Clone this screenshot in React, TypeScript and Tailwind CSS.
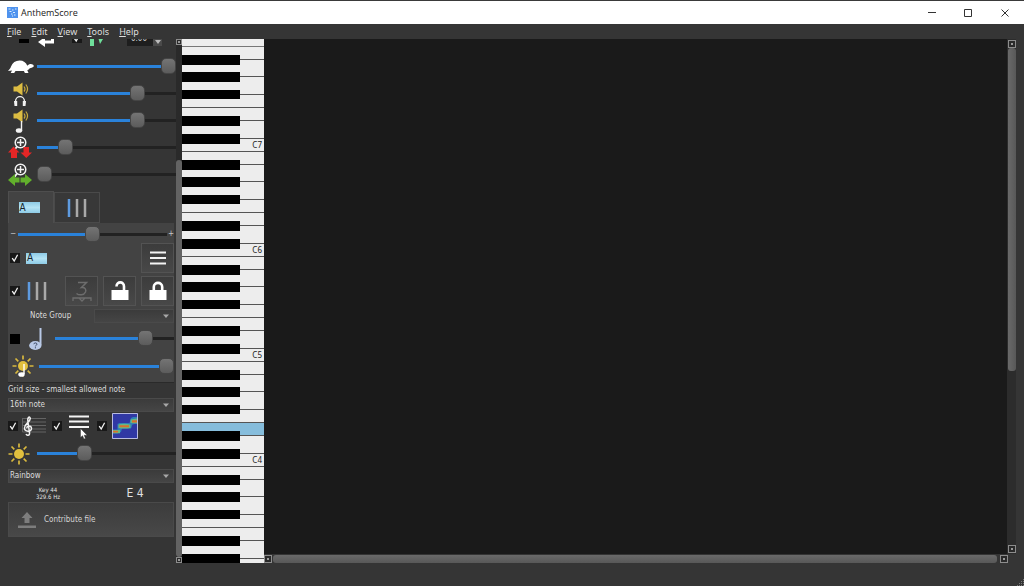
import { useState } from "react";
import type { CSSProperties, ReactNode } from "react";
import clsx from "clsx";

const Slider = ({ label, value }: { label: string; value: number }) => {
  const [current, setCurrent] = useState(value);

  return (
    <input
      type="range"
      aria-label={label}
      value={current}
      onChange={(e) => setCurrent(Number(e.target.value))}
      style={{ "--fill": `${current}%` } as CSSProperties}
      className="block h-4 min-w-0 flex-1 appearance-none bg-transparent [&::-webkit-slider-runnable-track]:h-[3px] [&::-webkit-slider-runnable-track]:bg-[linear-gradient(to_right,#2a82da_var(--fill),#222222_var(--fill))] [&::-webkit-slider-thumb]:-mt-[7px] [&::-webkit-slider-thumb]:h-4 [&::-webkit-slider-thumb]:w-[15px] [&::-webkit-slider-thumb]:appearance-none [&::-webkit-slider-thumb]:rounded-[5px] [&::-webkit-slider-thumb]:border [&::-webkit-slider-thumb]:border-[#454545] [&::-webkit-slider-thumb]:bg-linear-to-b [&::-webkit-slider-thumb]:from-[#747474] [&::-webkit-slider-thumb]:to-[#5c5c5c]"
    />
  );
};

const Check = ({ label, checked = false }: { label: string; checked?: boolean }) => (
  <span className="grid size-[10px] shrink-0">
    <input
      type="checkbox"
      aria-label={label}
      defaultChecked={checked}
      className="peer col-start-1 row-start-1 size-[10px] appearance-none bg-black checked:bg-[#181818]"
    />
    <svg
      viewBox="0 0 10 10"
      className="pointer-events-none invisible col-start-1 row-start-1 size-[10px] peer-checked:visible"
    >
      <path d="M2.2 5.2 4.2 8 7.6 1.8" fill="none" stroke="#f0f0f0" strokeWidth="1.3" />
    </svg>
  </span>
);

const Turtle = () => (
  <svg viewBox="0 0 26 14" className="h-[14px] w-[26px]">
    <path
      d="M0 11C1.500 9 2.500 8.500 3 6.500 4.500 2.500 7.500 .5 11.500 .5c4 0 6.500 2 7.800 5.200 1.200-1.200 2.800-1.800 4.300-1.500 1.700.2 2.400 1.200 2.100 2.200-.4 1-2.400 1.200-3.900 1.800-.8.900-1.500 1.500-2.500 2l1.200 2.900h-3.600l-1-2.200H7.500l-1.300 2.200H2.700l1.300-2.500z"
      fill="#fff"
    />
  </svg>
);

const Speaker = ({ children }: { children: ReactNode }) => (
  <svg viewBox="0 0 18 24" className="h-6 w-[18px]">
    <path d="M1.500 4.500H5L10.500 .5v13L5 9.500H1.500z" fill="#dcbc42" />
    <path d="M12 4.500q2 2.700 0 5M13.800 2.500q3.500 4.500 0 9" fill="none" stroke="#c9ab3c" strokeWidth="1.200" />
    {children}
  </svg>
);

const Magnifier = () => (
  <g fill="none" stroke="#f2f2f2">
    <circle cx="12.500" cy="6.500" r="5.300" strokeWidth="1.500" />
    <path d="M12.500 3v7M9 6.500h7" strokeWidth="1.500" />
    <path d="M9 10.500 6.500 14" strokeWidth="1.800" />
  </g>
);

const ZoomVertical = () => (
  <svg viewBox="0 0 24 24" className="size-6">
    <Magnifier />
    <path d="M5.500 10.500 11.500 16.500H9V22H3v-5.500H0z" fill="#e42626" />
    <path d="M15.500 11H21v5.500h3L18.300 22 12.500 16.500h3z" fill="#e42626" />
  </svg>
);

const ZoomHorizontal = () => (
  <svg viewBox="0 0 24 24" className="size-6">
    <Magnifier />
    <path d="M0 17 7 11v3.500h4.500v5H7V23zM24 17 17 11v3.500h-4.500v5H17V23z" fill="#62b02c" />
  </svg>
);

const NoteBlock = () => (
  <span className="flex h-[11px] w-[21px] items-center bg-linear-to-b from-[#8ecbe6] via-[#b4e4f5] to-[#8ecbe6] pl-px text-[10px] leading-none text-[#16242c]">
    A
  </span>
);

const Bars = () => (
  <svg viewBox="0 0 20 18" className="h-[18px] w-5">
    <path d="M2 0v18" stroke="#5e9be0" strokeWidth="2.500" />
    <path d="M10 0v18M18 0v18" stroke="#a9a9a9" strokeWidth="2.500" />
  </svg>
);

const Lines = () => (
  <svg viewBox="0 0 16 14" className="h-[14px] w-4">
    <path d="M0 1.500h16M0 7h16M0 12.500h16" stroke="#f4f4f4" strokeWidth="2.200" />
  </svg>
);

const Padlock = ({ open = false }: { open?: boolean }) => (
  <svg viewBox="0 0 18 20" className="h-5 w-[18px]">
    <path d="M.5 9h17v10H.5z" fill="#fff" />
    <path
      d={open ? "M5.500 5.500C5.500 0 13 0 13 5.500V9" : "M4.800 9.500V6C4.800 .5 13.200 .5 13.200 6v3.500"}
      fill="none"
      stroke="#fff"
      strokeWidth="2.600"
    />
  </svg>
);

const Triplet = () => (
  <svg viewBox="0 0 20 21" className="h-[21px] w-5" fill="none" stroke="#6d6d6d">
    <path d="M6 1.500H14.500L9.500 6.500C13 6 14.500 8.500 13.500 11 12 14.500 7 14.500 4.500 12.500" strokeWidth="1.500" />
    <path d="M1 20v-3h18v3M7 17l3 3 3-3" strokeWidth="1.300" />
  </svg>
);

const QuestionNote = () => (
  <svg viewBox="0 0 14 22" className="h-[22px] w-[14px]">
    <path d="M11.500 0v17" stroke="#b9c9e6" strokeWidth="2" />
    <ellipse cx="6.300" cy="17.500" rx="6.200" ry="4.400" fill="#b9c9e6" />
    <path d="M4.800 16.200c0-1.700 3.200-1.700 3.200 0 0 1-1.600 1-1.600 2.200M6.400 19.200v1.200" fill="none" stroke="#3c4a66" />
  </svg>
);

const Sun = ({ note = false }: { note?: boolean }) => (
  <svg viewBox="0 0 22 22" className="size-[22px] shrink-0">
    <circle cx="11" cy="11" r="5" fill="#e0bf3e" />
    <path
      d="M11 .5V4.500M11 17.500V21.500M.5 11h4M17.500 11h4M3.500 3.500l2.800 2.800M15.700 15.700l2.800 2.800M18.500 3.500l-2.800 2.800M6.300 15.700l-2.800 2.800"
      stroke="#d9b93f"
      strokeWidth="1.700"
    />
    {note && (
      <>
        <path d="M12 9v10" stroke="#fff" strokeWidth="1.400" />
        <ellipse cx="9.500" cy="19.500" rx="3.200" ry="2.300" fill="#fff" />
      </>
    )}
  </svg>
);

const Staff = () => (
  <svg viewBox="0 0 24 20" className="h-5 w-6 shrink-0">
    <path d="M.5 2v14M.5 2.500H24M.5 6H24M.5 9.500H24M.5 13H24M.5 16H24" stroke="#6a6a6a" strokeWidth=".9" fill="none" />
    <path
      d="M4 18c1 2 4 1.500 3.500-1L5.800 4.500C5.500 1 8 0 8.300 2.500 8.500 6 2.500 7.500 2.500 12c0 4 7 4.300 7 .5 0-3.500-5-3-4.600-.2"
      fill="none"
      stroke="#f2f2f2"
      strokeWidth="1.500"
    />
  </svg>
);

const Spectrogram = () => (
  <svg viewBox="0 0 26 26" className="size-[26px] shrink-0">
    <path d="M0 0h26v26H0z" fill="#3038a4" />
    <path d="M1 16.500h4.500V11l2-1h10l1.500-5 2-1h4v6.500l-4.500 1-1.500 4h-9l-1 3.500-3.500 1.500H1z" fill="#2f7fb8" />
    <path d="M1 17h7v3.200H1zM6.500 11.500q5-1.500 12 0v3.500q-6 1-12 0zM18.500 6.500l6.500-1v5l-6.500-.5z" fill="#66b884" />
    <path d="M1 17.800h5v1.700H1zM7.500 12.200h9.500v2H7.500zM20 7.200h5v2.300h-5z" fill="#d9702c" />
    <path d="M.5 .5h25v25H.5z" fill="none" stroke="#b8bbe0" />
  </svg>
);

const Row = ({ icon, label, value }: { icon: ReactNode; label: string; value: number }) => (
  <div className="flex h-[27px] items-center">
    <span className="flex w-[29px] shrink-0">{icon}</span>
    <Slider label={label} value={value} />
  </div>
);

const Select = ({ label, value, id, className }: { label?: string; value: string; id?: string; className?: string }) => (
  <span className={clsx("grid items-center border border-[#4a4a4a] bg-linear-to-b from-[#3b3b3b] to-[#454545]", className)}>
    <select
      id={id}
      aria-label={label}
      className="col-start-1 row-start-1 w-full appearance-none bg-transparent pl-px leading-3 text-[#dcdcdc]"
    >
      <option>{value}</option>
    </select>
    <svg viewBox="0 0 6 4" className="pointer-events-none col-start-1 row-start-1 mr-1 h-1 w-[6px] justify-self-end">
      <path d="M0 .5h6L3 4z" fill="#a8a8a8" />
    </svg>
  </span>
);

const ToolButton = ({ label, children }: { label: string; children: ReactNode }) => (
  <button
    aria-label={label}
    className="flex h-[30px] w-[33px] shrink-0 items-center justify-center border border-[#535353] bg-linear-to-b from-[#3c3c3c] to-[#484848]"
  >
    {children}
  </button>
);

const ScrollButton = ({ label, small = false }: { label: string; small?: boolean }) => (
  <button
    aria-label={label}
    className={clsx(
      "flex shrink-0 items-center justify-center border border-[#8d8d8d] bg-[#2a2a2a]",
      small ? "size-[6px]" : "size-2",
    )}
  >
    <span className="size-[2px] bg-[#9a9a9a]" />
  </button>
);

const BlackKey = ({ short = false, lit = false }: { short?: boolean; lit?: boolean }) => (
  <div className={clsx("flex", short ? "h-[9px]" : "h-[10px]")}>
    <div className="w-[58px] bg-black" />
    <div className="flex flex-1 flex-col">
      <div className={clsx("h-[5px] border-b border-[#555]", lit && "bg-[#86bddc]")} />
    </div>
  </div>
);

// One octave from B down to C; white rows are the strips between black keys
const Octave = ({ name, litE = false }: { name?: string; litE?: boolean }) => (
  <div className="relative shrink-0">
    <div className="h-2" />
    <BlackKey />
    <div className="h-[7px]" />
    <BlackKey />
    <div className="h-2" />
    <BlackKey short />
    <div className="h-[9px] border-b border-[#555]" />
    <div className={clsx("h-2", litE && "bg-[#86bddc]")} />
    <BlackKey lit={litE} />
    <div className="h-2" />
    <BlackKey />
    <div className="h-2 border-b border-[#555]" />
    {name && <span className="absolute right-[2px] bottom-[3px] text-[8px] leading-2 text-[#222]">{name}</span>}
  </div>
);

const Keyboard = () => (
  <div className="flex w-[82px] shrink-0 flex-col overflow-hidden bg-[#ededed]">
    <div className="h-2 shrink-0 border-b border-[#777]" />
    <Octave name="C7" />
    <Octave name="C6" />
    <Octave name="C5" />
    <Octave name="C4" litE />
    <Octave />
  </div>
);

const Sidebar = () => (
  <aside className="w-[176px] shrink-0 overflow-hidden pl-2 font-['DejaVu_Sans_Condensed','Noto_Sans',sans-serif] text-[8px] leading-3">
    <div className="-mt-[10px] mb-[6px] flex h-[18px] items-center pl-[11px]">
      <Check label="Loop" />
      <svg viewBox="0 0 18 18" className="ml-2 h-[18px] w-[18px]">
        <path d="M3 5h12.500v8H6" fill="none" stroke="#fff" strokeWidth="3" />
        <path d="M1 13l7-5v10z" fill="#fff" />
      </svg>
      <span className="ml-[17px]">
        <Check label="Metronome" checked />
      </span>
      <svg viewBox="0 0 14 18" className="ml-2 h-[18px] w-[14px]">
        <path d="M0 2h4v15H0zM8 8l5 2-3 5z" fill="#6fdf9b" />
      </svg>
      <input
        aria-label="Offset"
        defaultValue="0.00"
        className="ml-[23px] h-[15px] w-[26px] bg-[#1e1e1e] px-1 text-[#d0d0d0]"
      />
      <button aria-label="Decrease offset" className="flex h-[15px] w-[9px] items-center justify-center bg-[#4a4a4a] pt-2">
        <svg viewBox="0 0 6 4" className="h-1 w-[6px]">
          <path d="M0 0h6L3 4z" fill="#bbb" />
        </svg>
      </button>
    </div>

    <Row icon={<Turtle />} label="Playback speed" value={100} />
    <Row
      icon={
        <span className="pl-1">
          <Speaker>
            <path d="M3.500 22v-2.500c0-6.500 9-6.500 9 0V22" fill="none" stroke="#f2f2f2" strokeWidth="1.300" />
            <path d="M2 19h3.200v5H2.500zM10.800 19H14l-.5 5h-2.700z" fill="#f2f2f2" />
          </Speaker>
        </span>
      }
      label="Song volume"
      value={75}
    />
    <Row
      icon={
        <span className="pl-1">
          <Speaker>
            <path d="M9.500 12v10" stroke="#f2f2f2" strokeWidth="1.400" />
            <ellipse cx="7" cy="21.500" rx="3.200" ry="2.300" fill="#f2f2f2" />
          </Speaker>
        </span>
      }
      label="Note volume"
      value={75}
    />
    <Row icon={<ZoomVertical />} label="Vertical zoom" value={17} />
    <Row icon={<ZoomHorizontal />} label="Horizontal zoom" value={0} />

    <div role="tablist" className="mt-[3px] flex h-8 items-end">
      <button
        role="tab"
        aria-selected="true"
        aria-label="Notes"
        className="flex h-8 w-[46px] items-center justify-center border border-b-0 border-[#4e4e4e] bg-[#434343] pr-1"
      >
        <NoteBlock />
      </button>
      <button
        role="tab"
        aria-selected="false"
        aria-label="Beats"
        className="flex h-[31px] w-[46px] items-center justify-center border border-[#4a4a4a] bg-[#383838]"
      >
        <Bars />
      </button>
    </div>
    <section className="mr-[2px] flex flex-col border-b border-[#2a2a2a] bg-[#434343] pt-[2px] pb-[2px]">
      <div className="flex h-[18px] items-center pl-[2px] text-[#c8c8c8]">
        <span className="w-2">−</span>
        <Slider label="Threshold" value={50} />
        <span className="w-[7px] text-right">+</span>
      </div>
      <div className="flex h-[30px] items-center pl-[2px]">
        <Check label="Show notes" checked />
        <span className="ml-[6px]">
          <NoteBlock />
        </span>
        <span className="ml-auto">
          <ToolButton label="Note options">
            <Lines />
          </ToolButton>
        </span>
      </div>
      <div className="mt-[3px] flex h-[30px] items-center pl-[2px]">
        <Check label="Show beats" checked />
        <span className="ml-[7px]">
          <Bars />
        </span>
        <div className="ml-auto flex gap-[5px]">
          <ToolButton label="Triplet">
            <Triplet />
          </ToolButton>
          <ToolButton label="Unlock">
            <Padlock open />
          </ToolButton>
          <ToolButton label="Lock">
            <Padlock />
          </ToolButton>
        </div>
      </div>
      <div className="mt-[3px] flex h-[14px] items-center justify-between pl-[22px]">
        <label htmlFor="note-group" className="text-[#dcdcdc]">
          Note Group
        </label>
        <Select id="note-group" value="" className="h-[14px] w-20" />
      </div>
      <div className="mt-[2px] flex h-[27px] items-center pl-[2px]">
        <Check label="Note duration" />
        <span className="mr-3 ml-[9px]">
          <QuestionNote />
        </span>
        <Slider label="Note length" value={80} />
      </div>
      <div className="flex h-7 items-center pl-1">
        <span className="w-[27px]">
          <Sun note />
        </span>
        <Slider label="Note brightness" value={100} />
      </div>
    </section>

    <div className="mr-[2px] flex flex-col">
      <label htmlFor="grid-size" className="mt-px h-[14px] text-[#dcdcdc]">
        Grid size - smallest allowed note
      </label>
      <Select id="grid-size" value="16th note" className="h-[14px]" />
      <div className="relative flex h-7 items-center">
        <Check label="Show staff" checked />
        <span className="mr-[6px] ml-1">
          <Staff />
        </span>
        <Check label="Show grid lines" checked />
        <svg viewBox="0 0 20 22" className="mr-2 ml-[7px] h-[22px] w-5">
          <path d="M0 1.500h20M0 6.500h20M0 12h20" stroke="#f4f4f4" strokeWidth="2.200" />
        </svg>
        <Check label="Show spectrogram" checked />
        <span className="ml-[5px]">
          <Spectrogram />
        </span>
        <svg viewBox="0 0 8 12" className="absolute top-4 left-[72px] h-3 w-2">
          <path d="M.5 .5v9l2-1.800L4 11l1.500-.6L4.200 7.200h3z" fill="#fff" stroke="#222" strokeWidth=".4" />
        </svg>
      </div>
    </div>
    <Row icon={<Sun />} label="Spectrogram brightness" value={32} />
    <Select label="Color map" value="Rainbow" className="mt-[2px] mr-[2px] h-[14px]" />
    <div className="mr-[2px] flex h-[19px] items-center text-[#e2e2e2]">
      <div className="w-20 text-center text-[6px] leading-[7px]">
        Key 44
        <br />
        329.6 Hz
      </div>
      <div className="flex-1 pl-2 text-center text-xs">E 4</div>
    </div>
    <button className="flex h-[35px] w-[166px] items-center gap-[7px] border border-[#4a4a4a] bg-linear-to-b from-[#3c3c3c] to-[#484848] pl-2 text-[#d4d4d4]">
      <svg viewBox="0 0 20 18" className="h-[18px] w-5">
        <path d="M10 1l5.500 6H12.500v5h-5V7H4.500zM1 14.500h18V17H1z" fill="#7d7d7d" />
      </svg>
      Contribute file
    </button>
  </aside>
);

const menus = ["File", "Edit", "View", "Tools", "Help"];

export default function App() {
  return (
    <div className="flex h-screen flex-col overflow-hidden bg-[#353535] font-['Noto_Sans',sans-serif]">
      <header className="flex h-6 shrink-0 items-center border-t border-[#3a3a3a] bg-white pl-[7px]">
        <svg viewBox="0 0 11 11" className="size-[11px]">
          <path d="M0 0h11v11H0z" fill="#4f93ee" />
          <path d="M1.500 2h2M5 3h1.500M8 2h1.500M2.500 4.500h2M6 5.500h2M4 7h1.500M7 8h1.500M5 9h1" stroke="#dcecff" />
        </svg>
        <h1 className="ml-[3px] font-['Open_Sans',sans-serif] text-[9px] text-[#222]">AnthemScore</h1>
        <div className="ml-auto flex">
          <button aria-label="Minimize" className="flex h-[23px] w-9 items-center justify-center">
            <svg viewBox="0 0 8 8" className="size-2">
              <path d="M0 3.500h8" stroke="#333" />
            </svg>
          </button>
          <button aria-label="Maximize" className="flex h-[23px] w-9 items-center justify-center">
            <svg viewBox="0 0 8 8" className="size-2">
              <path d="M.5 .5h7v7h-7z" fill="none" stroke="#333" />
            </svg>
          </button>
          <button aria-label="Close" className="flex h-[23px] w-[38px] items-center justify-center">
            <svg viewBox="0 0 8 8" className="size-2">
              <path d="M.5 .5l7 7M7.500 .5l-7 7" stroke="#333" />
            </svg>
          </button>
        </div>
      </header>
      <nav className="flex h-[15px] shrink-0 items-center gap-[10px] pl-[7px] text-[9px] leading-[15px] text-[#dedede]">
        {menus.map((name) => (
          <button key={name}>
            <span className="underline">{name[0]}</span>
            {name.slice(1)}
          </button>
        ))}
      </nav>

      <main className="flex min-h-0 flex-1">
        <Sidebar />
        <div className="flex w-[6px] shrink-0 flex-col bg-[#2a2a2a]">
          <ScrollButton label="Scroll panel up" small />
          <div className="h-[22%]" />
          <div className="flex-1 rounded-[3px] bg-[#636363]" />
          <ScrollButton label="Scroll panel down" small />
        </div>
        <Keyboard />
        <div className="flex min-w-0 flex-1 flex-col">
          <div className="flex min-h-0 flex-1">
            <div className="flex-1 bg-[#1a1a1a]" />
            <div className="flex w-[9px] flex-col items-center bg-[#2c2c2c] py-px">
              <ScrollButton label="Scroll up" />
              <div className="h-[63%] w-2 rounded-[3px] bg-linear-to-r from-[#6a6a6a] to-[#585858]" />
              <div className="flex-1" />
              <ScrollButton label="Scroll down" />
            </div>
          </div>
          <div className="mr-2 flex h-[9px] shrink-0 items-center gap-px">
            <ScrollButton label="Scroll left" />
            <div className="mr-[2px] h-2 flex-1 rounded-[3px] bg-linear-to-b from-[#6a6a6a] to-[#585858]" />
            <ScrollButton label="Scroll right" />
          </div>
        </div>
        <div className="w-2 shrink-0" />
      </main>
      <footer className="flex h-[23px] shrink-0 items-end justify-end">
        <svg viewBox="0 0 8 8" className="size-2">
          <path d="M1 7.500h7M3 5.500h5M5 3.500h3M7 1.500h1" stroke="#777" strokeDasharray="1 1" />
        </svg>
      </footer>
    </div>
  );
}
